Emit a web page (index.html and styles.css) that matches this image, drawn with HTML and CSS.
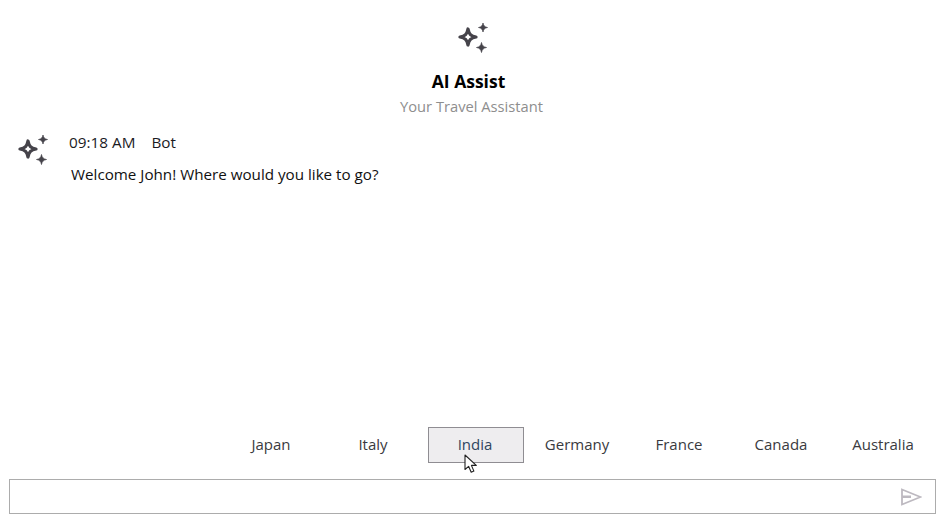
FILE: index.html
```html
<!DOCTYPE html>
<html lang="en">
<head>
<meta charset="utf-8">
<title>AI Assist</title>
<link rel="stylesheet" href="styles.css">
</head>
<body>
<main class="chat">
  <header class="head">
    <svg class="spark" viewBox="0 0 32 32" aria-hidden="true">
      <use href="#sparks"/>
    </svg>
    <h1 class="title">AI Assist</h1>
    <p class="subtitle">Your Travel Assistant</p>
  </header>
  <section class="messages">
    <div class="message">
      <svg class="spark" viewBox="0 0 32 32" aria-hidden="true">
        <defs>
          <g id="sparks">
            <path fill="none" stroke="#45434a" stroke-width="3.300" stroke-linejoin="round" d="M11 7 C12 12.200 13.800 14 19 15 C13.800 16 12 17.800 11 23 C10 17.800 8.200 16 3 15 C8.200 14 10 12.200 11 7 Z"/>
            <path fill="#45434a" stroke="#45434a" stroke-width=".7" stroke-linejoin="round" d="M26 1 C26.500 3.800 27.700 5 30.500 5.500 C27.700 6 26.500 7.200 26 10 C25.500 7.200 24.300 6 21.500 5.500 C24.300 5 25.500 3.800 26 1 Z"/>
            <path fill="#45434a" stroke="#45434a" stroke-width=".7" stroke-linejoin="round" d="M24.500 20.500 C25 23.500 26.500 25 29.500 25.500 C26.500 26 25 27.500 24.500 30.500 C24 27.500 22.500 26 19.500 25.500 C22.500 25 24 23.500 24.500 20.500 Z"/>
          </g>
        </defs>
        <use href="#sparks"/>
      </svg>
      <div class="body">
        <div class="meta"><span>09:18 AM</span><span>Bot</span></div>
        <p class="text">Welcome John! Where would you like to go?</p>
      </div>
    </div>
  </section>
  <div class="suggestions">
    <button class="chip" type="button">Japan</button>
    <button class="chip" type="button">Italy</button>
    <button class="chip chip-hover" type="button">India
      <svg class="cursor" viewBox="0 0 14 20" aria-hidden="true">
        <path fill="#fff" stroke="#222" stroke-width="1.100" stroke-linejoin="round" d="M1 1 L1 15.500 L4.600 12.300 L7.200 18.300 L9.900 17.100 L7.400 11.400 L12.300 11.400 Z"/>
      </svg>
    </button>
    <button class="chip" type="button">Germany</button>
    <button class="chip" type="button">France</button>
    <button class="chip" type="button">Canada</button>
    <button class="chip" type="button">Australia</button>
  </div>
  <form class="composer">
    <input class="field" type="text" aria-label="Message">
    <svg class="send" viewBox="0 0 21 18" aria-hidden="true">
      <path fill="none" stroke="#bdb9c0" stroke-width="1.800" stroke-linejoin="miter" d="M1 1.500 L19.500 9 L1 16.500 Z"/>
      <path fill="#bdb9c0" d="M1 7.500 H10 V10 H1 Z"/>
    </svg>
  </form>
</main>
</body>
</html>
```
FILE: styles.css
```css
* { box-sizing: border-box; }
html, body { margin: 0; height: 100%; }
body {
  background: #fff;
  color: #1b1b1f;
  font-family: "Open Sans", "Noto Sans", "Liberation Sans", sans-serif;
  font-size: 15px;
}
.chat {
  width: 946px;
  height: 522px;
  display: flex;
  flex-direction: column;
  overflow: hidden;
}
.head {
  display: flex;
  flex-direction: column;
  align-items: center;
  padding-top: 22px;
}
.spark { width: 32px; height: 32px; flex: none; display: block; }
.title {
  margin: 16px 9px 0 0;
  font-size: 17.5px;
  line-height: 23px;
  font-weight: 700;
  color: #000;
}
.subtitle {
  margin: 3px 3px 0 0;
  font-size: 14.7px;
  line-height: 20px;
  color: #8e8e8e;
}
.messages { flex: 1; padding: 16px 0 0 17px; }
.message { display: flex; gap: 20px; }
.message > .spark { margin-top: 2px; }
.body { display: flex; flex-direction: column; }
.meta { display: flex; gap: 16px; font-size: 15.3px; line-height: 20px; }
.text { margin: 12px 0 0 2px; font-size: 15.2px; line-height: 20px; color: #111; }
.suggestions {
  display: flex;
  justify-content: flex-end;
  gap: 6px;
  padding-right: 14px;
}
.chip {
  position: relative;
  width: 96px;
  height: 36px;
  padding: 0 2px 2px 0;
  border: 1px solid transparent;
  background: transparent;
  color: #3a3a40;
  font: inherit;
}
.chip-hover {
  background: #eeedef;
  border-color: #8f8d92;
  color: #2f4560;
}
.cursor {
  position: absolute;
  left: 35px;
  top: 26px;
  width: 14px;
  height: 20px;
}
.composer {
  position: relative;
  margin: 16px 10px 8px 9px;
  height: 35px;
}
.field {
  display: block;
  width: 100%;
  height: 100%;
  border: 1px solid #acacac;
  background: #fff;
  outline: none;
}
.send {
  position: absolute;
  right: 14px;
  top: 9px;
  width: 21px;
  height: 18px;
}
```
